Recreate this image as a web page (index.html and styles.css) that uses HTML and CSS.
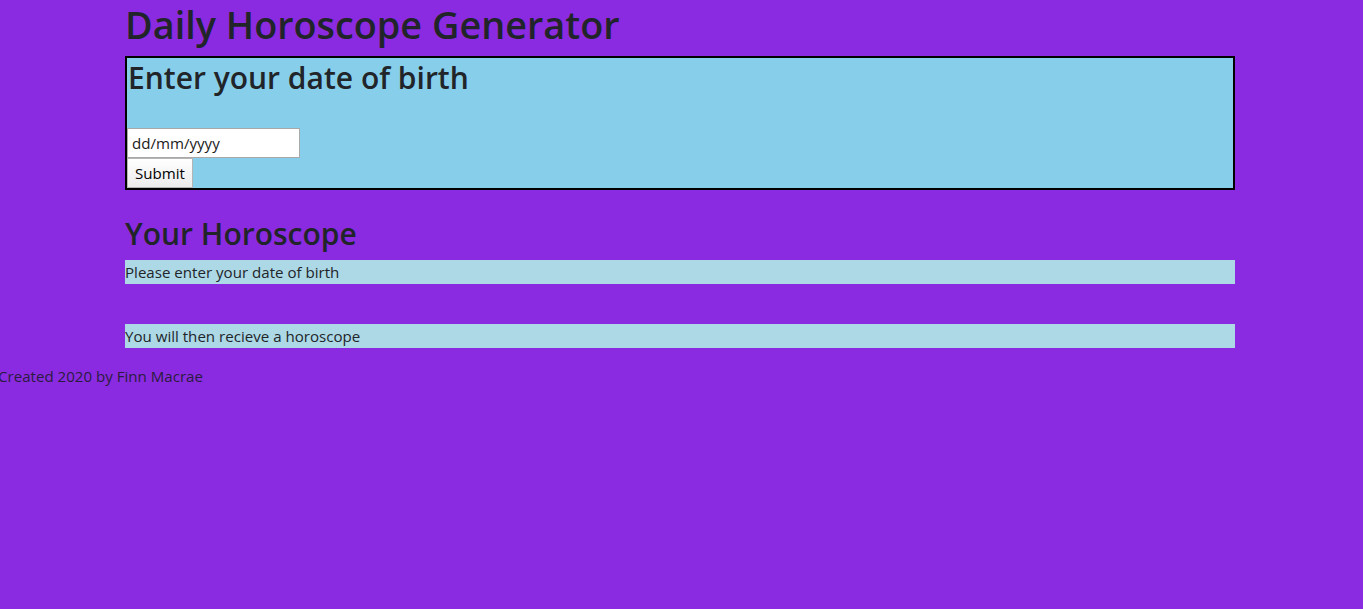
FILE: index.html
```html
<!DOCTYPE html>
<html lang="en">
<head>
<meta charset="utf-8">
<title>Daily Horoscope Generator</title>
<link rel="stylesheet" href="styles.css">
</head>
<body>
<div class="container">
  <h1 class="title">Daily Horoscope Generator</h1>
  <div class="dob-box">
    <h2 class="section-title">Enter your date of birth</h2>
    <div class="spacer"></div>
    <input class="date-input" type="text" placeholder="dd/mm/yyyy">
    <div><button class="submit-btn" type="button">Submit</button></div>
  </div>
  <div class="spacer"></div>
  <h2 class="section-title">Your Horoscope</h2>
  <p class="result">Please enter your date of birth</p>
  <div class="spacer"></div>
  <p class="result">You will then recieve a horoscope</p>
</div>
<footer class="footer">Created 2020 by Finn Macrae</footer>
</body>
</html>
```
FILE: styles.css
```css
html, body {
  margin: 0;
  padding: 0;
}
body {
  background: #8a2be2;
  color: #212529;
  font-family: "Open Sans", "Noto Sans", sans-serif;
  font-size: 15.1px;
  line-height: 24px;
}
.container {
  width: 1110px;
  margin-left: 125px;
}
.title {
  margin: 0 0 8px 0;
  padding-top: 2px;
  font-size: 37.8px;
  font-weight: 600;
  line-height: 46px;
}
.section-title {
  margin: 0 0 8px 0;
  padding-top: 2px;
  font-size: 30px;
  font-weight: 600;
  line-height: 36px;
}
.dob-box {
  background: #87ceeb;
  border: 2px solid #000;
  padding: 0;
  display: flex;
  flex-direction: column;
  align-items: flex-start;
}
.dob-box .section-title {
  padding-left: 1px;
}
.spacer {
  height: 24px;
}
.date-input {
  box-sizing: border-box;
  width: 173px;
  height: 30px;
  margin: 0;
  padding: 0 4px;
  border: 1px solid #a9a9a9;
  background: #fff;
  font-family: inherit;
  font-size: 15.1px;
  color: #000;
}
.date-input::placeholder {
  color: #1a1a1a;
  opacity: 1;
}
.submit-btn {
  display: block;
  box-sizing: border-box;
  width: 66px;
  height: 30px;
  margin: 0;
  padding: 0 6px;
  border: 1px solid #b5b5b5;
  background: linear-gradient(#ffffff, #ececec);
  font-family: inherit;
  font-size: 15.1px;
  color: #000;
}
.result {
  margin: 0 0 16px 0;
  background: #add8e6;
  line-height: 24px;
}
.footer {
  margin-left: -2px;
  line-height: 24px;
  color: #2a1b3d;
}
```
